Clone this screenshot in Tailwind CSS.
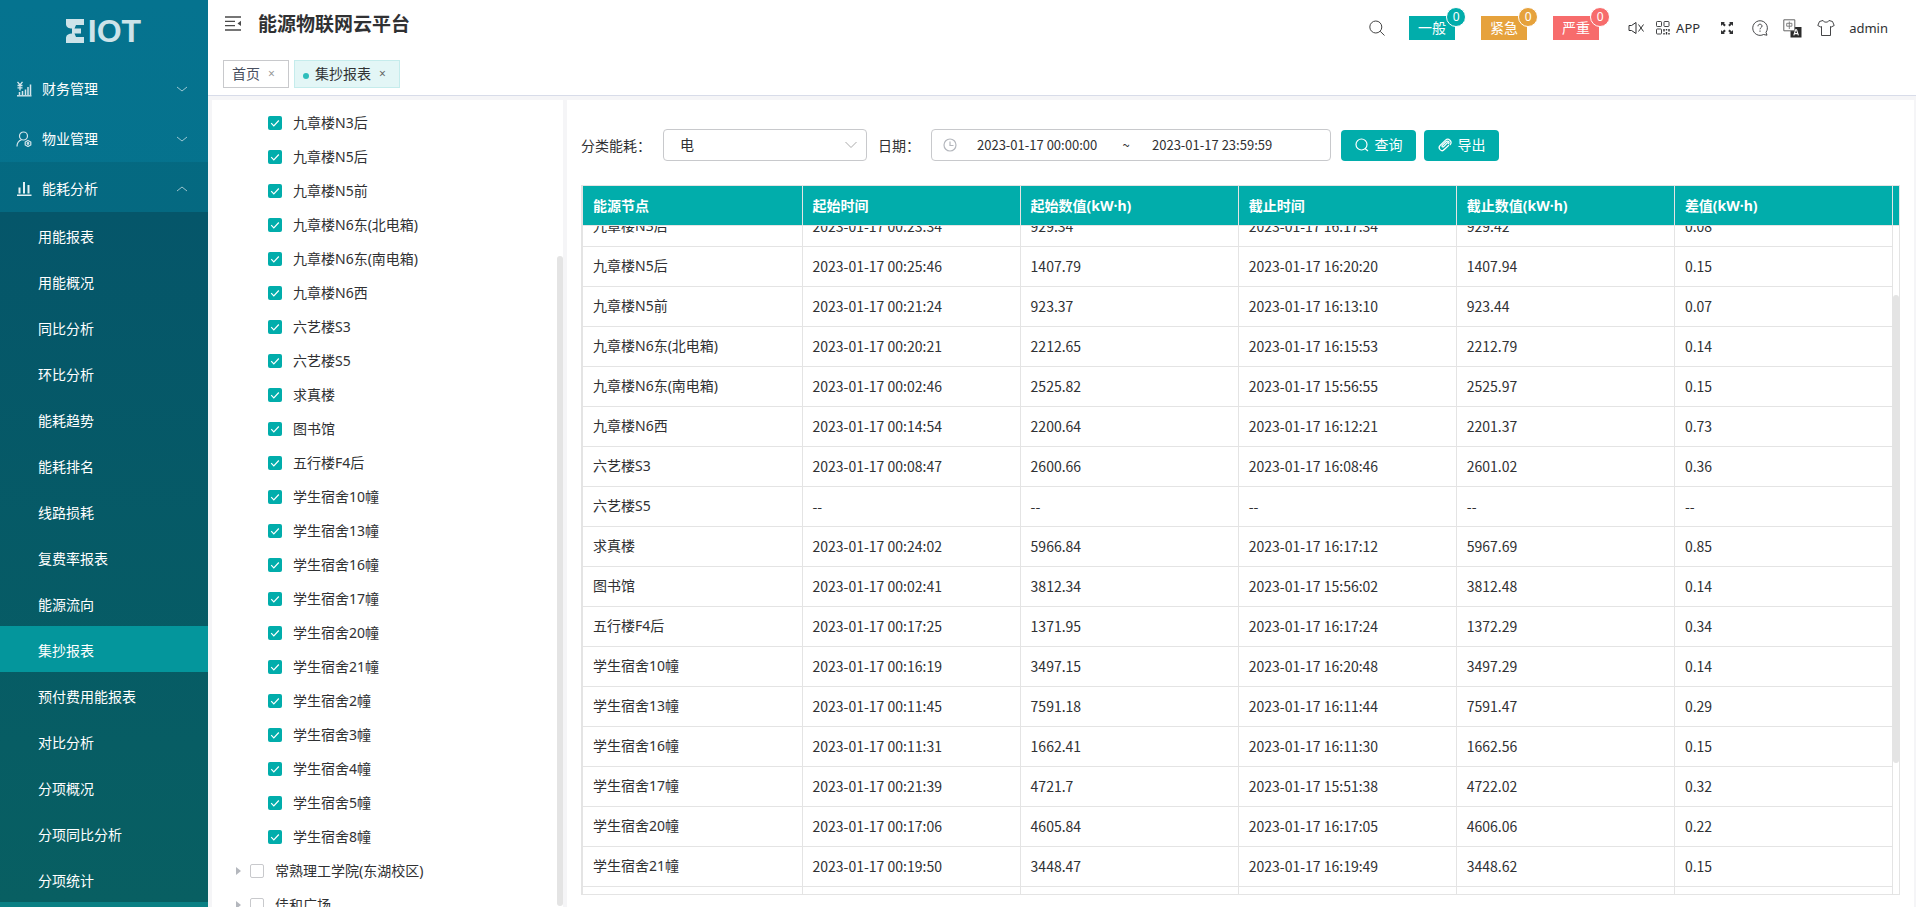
<!DOCTYPE html>
<html lang="zh-CN">
<head>
<meta charset="utf-8">
<meta name="viewport" content="width=device-width, initial-scale=1">
<title>能源物联网云平台</title>
<script src="https://cdn.jsdelivr.net/npm/@tailwindcss/browser@4"></script>
</head>
<body class="flex h-screen overflow-hidden bg-[#f5f5f7] font-['Noto_Sans','Noto_Sans_CJK_SC',sans-serif] text-sm text-[#303133]">

<!-- Sidebar -->
<aside class="flex w-52 shrink-0 flex-col overflow-hidden bg-linear-to-b from-[#05738f] via-[#06718a] to-[#0a8084] text-white">
  <a href="#" aria-label="EIOT" class="flex h-[62px] shrink-0 items-center justify-center gap-1 pr-px font-['Liberation_Sans',sans-serif] text-[32px] leading-none font-bold text-[#cde3e9]">
    <svg class="h-6 w-[18px]" viewBox="0 0 18 24" fill="currentColor" aria-hidden="true"><path d="M0 0H18V6H10L8.500 9.500H15V14.500H8.500L10 18H18V24H0V18.500C.5 15.500 3 14.500 6 14.500V9.500C3 9.500 .5 8.500 0 5.500Z"/></svg>
    <span>IOT</span>
  </a>
  <nav class="flex flex-col">
    <button type="button" class="flex h-[50px] shrink-0 items-center pt-1 pr-5 pl-4">
      <svg class="size-4 text-[#d5e6ec]" viewBox="0 0 16 16" fill="none" stroke="currentColor" aria-hidden="true"><path d="M1.500 .8L4 4l2.500-3.200M4 4v5.500M1.500 4.500h5M1.500 6.800h5" stroke-width="1.300"/><path d="M1 14.800h14.500" stroke-width="1.400"/><path d="M3.500 14v-3M6.500 14v-4M9.500 14V8.500M12 14V6M14.500 14V3.500" stroke-width="1.500"/></svg>
      <span class="ml-2.5">财务管理</span>
      <svg class="ml-auto size-3 text-white/60" viewBox="0 0 12 12" fill="none" stroke="currentColor" aria-hidden="true"><path d="M1 4l5 4 5-4"/></svg>
    </button>
    <button type="button" class="flex h-[50px] shrink-0 items-center pt-1 pr-5 pl-4">
      <svg class="size-4 text-[#d5e6ec]" viewBox="0 0 16 16" fill="none" stroke="currentColor" stroke-width="1.200" aria-hidden="true"><circle cx="7.500" cy="5" r="4"/><path d="M1 15.500c0-3.500 1.700-5.700 4.500-6.700"/><path d="M12 9.500l2.800 1.600v2.800L12 15.500l-2.800-1.600v-2.800z"/><circle cx="12" cy="12.500" r=".8"/></svg>
      <span class="ml-2.5">物业管理</span>
      <svg class="ml-auto size-3 text-white/60" viewBox="0 0 12 12" fill="none" stroke="currentColor" aria-hidden="true"><path d="M1 4l5 4 5-4"/></svg>
    </button>
    <button type="button" aria-expanded="true" class="flex h-[50px] shrink-0 items-center bg-black/8 pt-1 pr-5 pl-4">
      <svg class="size-4 text-[#e6f1f4]" viewBox="0 0 16 16" fill="currentColor" aria-hidden="true"><path d="M1 13.400h14.500V15H1zM2.500 6.500h2v6h-2zM7 1h2v11.500H7zM11.500 4h2v8.500h-2z"/></svg>
      <span class="ml-2.5">能耗分析</span>
      <svg class="ml-auto size-3 text-white/60" viewBox="0 0 12 12" fill="none" stroke="currentColor" aria-hidden="true"><path d="M1 8l5-4 5 4"/></svg>
    </button>
    <div id="submenu" class="flex flex-col bg-linear-to-b from-[#05566a] to-[#085f62]"></div>
    <button type="button" class="flex h-[50px] shrink-0 items-center bg-[#0a8084] pr-5 pl-4" aria-label="更多菜单"></button>
  </nav>
</aside>

<div class="flex min-w-0 flex-1 flex-col">
  <!-- Top bar -->
  <header class="flex shrink-0 flex-col border-b border-[#d8dce9] bg-white">
    <div class="flex h-[60px] items-start justify-between pr-7 pl-4">
      <div class="flex h-12 items-center">
        <button type="button" aria-label="折叠菜单" class="flex">
          <svg class="size-[18px] text-[#4a4a4a]" viewBox="0 0 18 18" fill="none" stroke="currentColor" stroke-width="1.300" aria-hidden="true"><path d="M1 2h16M1 6.300h10M1 10.600h10M1 15h16"/><path d="M17 5.800v5.200l-3.500-2.600z" fill="currentColor" stroke="none"/></svg>
        </button>
        <h1 class="ml-4 text-[19px] leading-6 font-bold">能源物联网云平台</h1>
      </div>
      <div class="flex h-14 items-center">
        <button type="button" aria-label="搜索" class="flex">
          <svg class="size-4 text-[#444]" viewBox="0 0 16 16" fill="none" stroke="currentColor" aria-hidden="true"><circle cx="6.800" cy="7" r="6"/><path d="M11.200 11.300L15.500 15.500"/></svg>
        </button>
        <div class="ml-6 flex gap-[26px]">
          <button type="button" class="relative h-6 w-[46px] bg-[#01adab] leading-6 text-white">一般<span class="absolute -top-[9px] -right-[11px] flex size-5 items-center justify-center rounded-full border border-white bg-[#01adab] text-xs leading-none">0</span></button>
          <button type="button" class="relative h-6 w-[46px] bg-[#e6a23c] leading-6 text-white">紧急<span class="absolute -top-[9px] -right-[11px] flex size-5 items-center justify-center rounded-full border border-white bg-[#e6a23c] text-xs leading-none">0</span></button>
          <button type="button" class="relative h-6 w-[46px] bg-[#f76c6c] leading-6 text-white">严重<span class="absolute -top-[9px] -right-[11px] flex size-5 items-center justify-center rounded-full border border-white bg-[#f76c6c] text-xs leading-none">0</span></button>
        </div>
        <button type="button" aria-label="静音" class="ml-[29px] flex">
          <svg class="size-4" viewBox="0 0 16 16" fill="none" stroke="currentColor" aria-hidden="true"><path d="M1 5.500h2.500L8 2.500v11l-4.500-3H1zM10.500 4.500l5 7M15.500 4.500l-5 7"/></svg>
        </button>
        <button type="button" class="ml-3 flex items-center text-[13px]">
          <svg class="size-3.5" viewBox="0 0 14 14" fill="none" stroke="currentColor" stroke-width=".9" aria-hidden="true"><rect x=".5" y=".5" width="5" height="5" rx=".8"/><rect x="8" y=".5" width="5" height="5" rx=".8"/><rect x=".5" y="8" width="5" height="5" rx=".8"/><path d="M8 8v2.500M10.500 8v1.500M13 8v2.500M8 12v1.500M10.500 11v2.500M13 12v1.500" stroke-width="1.400"/></svg>
          <span class="ml-1.5">APP</span>
        </button>
        <button type="button" aria-label="全屏" class="ml-5 flex">
          <svg class="size-3.5" viewBox="0 0 14 14" fill="currentColor" aria-hidden="true"><path d="M1 1h4L3.900 2.100l1.900 1.900-1.500 1.500-1.900-1.900L1 5zM13 1H9l1.100 1.100L8.200 4l1.500 1.500 1.900-1.900L13 5zM1 13h4l-1.100-1.100L5.800 10 4.300 8.500l-1.900 1.900L1 9zM13 13H9l1.100-1.100L8.200 10l1.500-1.500 1.900 1.900L13 9z"/></svg>
        </button>
        <button type="button" aria-label="帮助" class="ml-[18px] flex">
          <svg class="size-4" viewBox="0 0 16 16" fill="none" stroke="currentColor" stroke-width=".9" aria-hidden="true"><path d="M14 12.300A7.300 7.300 0 1 0 11.500 14.500L15 15.200z"/><path d="M6 6.300c0-1.400.9-2.100 2-2.100s2 .8 2 1.900c0 1.500-2 1.600-2 3.200M8 10.500v1.300"/></svg>
        </button>
        <button type="button" aria-label="切换语言" class="ml-[15px] flex">
          <svg class="size-[19px]" viewBox="0 0 19 19" fill="none" aria-hidden="true"><path d="M7.500 8h11v10.500h-11z" fill="#2b2b2b"/><path d="M.8.800h11v11H.8z" fill="#fff" stroke="#666"/><path d="M3.700 4.300h5.200v2.900H3.700zM6.300 2.500v7.500" stroke="#777" stroke-width=".9"/><path d="M10.800 16.300l1.800-5.500h1l1.800 5.500M11.500 14.600h3.200" stroke="#fff" stroke-width="1.100"/></svg>
        </button>
        <button type="button" aria-label="主题" class="ml-[15px] flex">
          <svg class="size-[18px]" viewBox="0 0 18 18" fill="none" stroke="currentColor" stroke-width=".9" stroke-linejoin="round" aria-hidden="true"><path d="M6 1.500L2.500 2.500.8 6.500l3 1.500.7-.5V16.500h9V7.500l.7.500 3-1.500-1.700-4L12 1.500c-.8 2.200-5.200 2.200-6 0z"/></svg>
        </button>
        <a href="#" class="ml-3.5 text-[13px]">admin</a>
      </div>
    </div>
    <div class="flex gap-[5px] pb-[7px] pl-[15px]">
      <a href="#" class="flex h-7 w-[66px] items-center border border-[#c8c9cc] pl-2 text-[#495060]">首页<span class="ml-2 text-xs text-[#999]">×</span></a>
      <a href="#" aria-current="page" class="flex h-7 w-[106px] items-center border border-[#c5ecec] bg-[#e3f6f6] pl-2"><span class="mt-1 mr-1.5 size-1.5 rounded-full bg-[#2fbdbb]"></span>集抄报表<span class="ml-2 text-xs text-[#666]">×</span></a>
    </div>
  </header>

  <div class="flex min-h-0 flex-1 gap-1 pt-1 pr-0.5 pl-1">
    <!-- Node tree -->
    <section aria-label="能源节点" class="relative w-[351px] shrink-0 overflow-hidden bg-white pt-1.5">
      <ul id="tree"></ul>
      <div class="absolute top-[156px] right-0 bottom-px w-1.5 rounded-full bg-[#e4e4e4]"></div>
    </section>

    <main class="flex min-w-0 flex-1 flex-col bg-white pt-[29px] pr-3.5 pb-3 pl-3.5">
      <form class="flex items-center">
        <label for="kind">分类能耗<span class="font-['Noto_Sans_CJK_TC',sans-serif]">：</span></label>
        <div class="relative ml-3">
          <select id="kind" class="h-8 w-[204px] appearance-none rounded-sm border border-[#c8c9cc] bg-white px-4"><option>电</option></select>
          <svg class="pointer-events-none absolute top-2.5 right-2.5 size-3 text-[#aaa]" viewBox="0 0 12 12" fill="none" stroke="currentColor" aria-hidden="true"><path d="M.5 3L6 8.500 11.500 3"/></svg>
        </div>
        <label for="from" class="ml-[11px]">日期<span class="font-['Noto_Sans_CJK_TC',sans-serif]">：</span></label>
        <div class="ml-[11px] flex h-8 w-[400px] items-center rounded-sm border border-[#c8c9cc] pl-[11px] font-['Noto_Sans_CJK_SC',sans-serif] text-[13px]">
          <svg class="size-3.5 text-[#b4b7bd]" viewBox="0 0 14 14" fill="none" stroke="currentColor" stroke-width="1.200" aria-hidden="true"><circle cx="7" cy="7" r="6"/><path d="M7 3.500V7.500h3.500"/></svg>
          <input id="from" type="text" value="2023-01-17 00:00:00" class="ml-5 w-[123px] outline-none">
          <span class="w-[52px] text-center">~</span>
          <input type="text" aria-label="截止日期" value="2023-01-17 23:59:59" class="w-[130px] outline-none">
        </div>
        <button type="submit" class="ml-2.5 flex h-[31px] w-[75px] items-center justify-center gap-1.5 rounded-sm bg-[#01adab] text-white">
          <svg class="size-3.5" viewBox="0 0 14 14" fill="none" stroke="currentColor" stroke-width="1.200" aria-hidden="true"><circle cx="6.500" cy="6.500" r="5.500"/><path d="M10 10.500l3 2.500"/></svg>查询</button>
        <button type="button" class="ml-2 flex h-[31px] w-[75px] items-center justify-center gap-1.5 rounded-sm bg-[#01adab] text-white">
          <svg class="size-3.5" viewBox="0 0 14 14" fill="none" stroke="currentColor" stroke-width="1.200" stroke-linecap="round" aria-hidden="true"><path d="M10.500 7.500L6.300 11.700a2.900 2.900 0 0 1-4.200-4.200l5.400-5.400a3.300 3.300 0 0 1 4.700 4.600M9 9L5.500 12M9.600 4.600L5.300 8.900a.9.900 0 0 1-1.200-1.200l4.200-4.200a1.500 1.500 0 0 1 2.200 2.200"/></svg>导出</button>
      </form>

      <div class="relative mt-6 flex min-h-0 flex-1 flex-col border border-l-2 border-[#e4e4e4]">
        <div class="border-b border-[#e4e4e4] bg-[#01adab] pr-1.5">
          <table class="w-full table-fixed border-collapse text-left text-white">
            <thead><tr class="h-[39px]">
              <th class="w-[219px] border-r border-[#e4e4e4] px-2.5">能源节点</th>
              <th class="border-r border-[#e4e4e4] px-2.5">起始时间</th>
              <th class="border-r border-[#e4e4e4] px-2.5">起始数值(kW·h)</th>
              <th class="border-r border-[#e4e4e4] px-2.5">截止时间</th>
              <th class="border-r border-[#e4e4e4] px-2.5">截止数值(kW·h)</th>
              <th class="border-r border-[#e4e4e4] px-2.5">差值(kW·h)</th>
            </tr></thead>
          </table>
        </div>
        <div class="min-h-0 flex-1 overflow-hidden pr-1.5">
          <table class="-mt-5 w-full table-fixed border-collapse" aria-label="集抄报表"><tbody id="rows"></tbody></table>
        </div>
        <div class="absolute top-[109px] right-0 h-[468px] w-1.5 rounded-full bg-[#e4e4e4]"></div>
      </div>
    </main>
  </div>
</div>

<script>
const menu = ['用能报表','用能概况','同比分析','环比分析','能耗趋势','能耗排名','线路损耗','复费率报表','能源流向','集抄报表','预付费用能报表','对比分析','分项概况','分项同比分析','分项统计'];
document.getElementById('submenu').innerHTML = menu.map(m =>
  `<a href="#" class="flex h-[46px] items-center pl-[38px] pt-1 ${m === '集抄报表' ? 'bg-[#04969c]' : ''}">${m}</a>`).join('');

const leaves = ['九章楼N3后','九章楼N5后','九章楼N5前','九章楼N6东(北电箱)','九章楼N6东(南电箱)','九章楼N6西','六艺楼S3','六艺楼S5','求真楼','图书馆','五行楼F4后','学生宿舍10幢','学生宿舍13幢','学生宿舍16幢','学生宿舍17幢','学生宿舍20幢','学生宿舍21幢','学生宿舍2幢','学生宿舍3幢','学生宿舍4幢','学生宿舍5幢','学生宿舍8幢'];
const tick = '<svg class="pointer-events-none absolute inset-0 size-3.5" viewBox="0 0 14 14" fill="none" stroke="#fff" stroke-width="1.200" aria-hidden="true"><path d="M3.200 7.200l2.600 2.600 5-5.300"/></svg>';
document.getElementById('tree').innerHTML =
  leaves.map(n => `<li class="flex h-[34px] items-center pl-14"><label class="flex items-center"><span class="relative size-3.5"><input type="checkbox" checked class="block size-3.5 appearance-none rounded-xs bg-[#01adab]">${tick}</span><span class="ml-[11px]">${n}</span></label></li>`).join('') +
  ['常熟理工学院(东湖校区)','佳和广场'].map(n => `<li class="flex h-[34px] items-center pl-6"><button type="button" aria-label="展开" class="mr-[9px] h-2 border-y-4 border-l-[5px] border-y-transparent border-l-[#b4b7bd]"></button><label class="flex items-center"><input type="checkbox" class="block size-3.5 appearance-none rounded-xs border border-[#c8c9cc] bg-white"><span class="ml-[11px]">${n}</span></label></li>`).join('');

const data = [
  ['九章楼N3后','00:23:34','929.34','16:17:34','929.42','0.08'],
  ['九章楼N5后','00:25:46','1407.79','16:20:20','1407.94','0.15'],
  ['九章楼N5前','00:21:24','923.37','16:13:10','923.44','0.07'],
  ['九章楼N6东(北电箱)','00:20:21','2212.65','16:15:53','2212.79','0.14'],
  ['九章楼N6东(南电箱)','00:02:46','2525.82','15:56:55','2525.97','0.15'],
  ['九章楼N6西','00:14:54','2200.64','16:12:21','2201.37','0.73'],
  ['六艺楼S3','00:08:47','2600.66','16:08:46','2601.02','0.36'],
  ['六艺楼S5','--','--','--','--','--'],
  ['求真楼','00:24:02','5966.84','16:17:12','5967.69','0.85'],
  ['图书馆','00:02:41','3812.34','15:56:02','3812.48','0.14'],
  ['五行楼F4后','00:17:25','1371.95','16:17:24','1372.29','0.34'],
  ['学生宿舍10幢','00:16:19','3497.15','16:20:48','3497.29','0.14'],
  ['学生宿舍13幢','00:11:45','7591.18','16:11:44','7591.47','0.29'],
  ['学生宿舍16幢','00:11:31','1662.41','16:11:30','1662.56','0.15'],
  ['学生宿舍17幢','00:21:39','4721.7','15:51:38','4722.02','0.32'],
  ['学生宿舍20幢','00:17:06','4605.84','16:17:05','4606.06','0.22'],
  ['学生宿舍21幢','00:19:50','3448.47','16:19:49','3448.62','0.15'],
  ['','','','','',''],
];
const stamp = t => t.includes(':') ? '2023-01-17 ' + t : t;
document.getElementById('rows').innerHTML = data.map(r =>
  `<tr class="h-10 border-b border-[#e4e4e4]"><td class="w-[219px] border-r border-[#e4e4e4] px-2.5">${r[0]}</td>` +
  r.slice(1).map(v => `<td class="border-r border-[#e4e4e4] px-2.5 font-['Noto_Sans_CJK_SC',sans-serif]">${stamp(v)}</td>`).join('') + '</tr>').join('');
</script>
</body>
</html>
